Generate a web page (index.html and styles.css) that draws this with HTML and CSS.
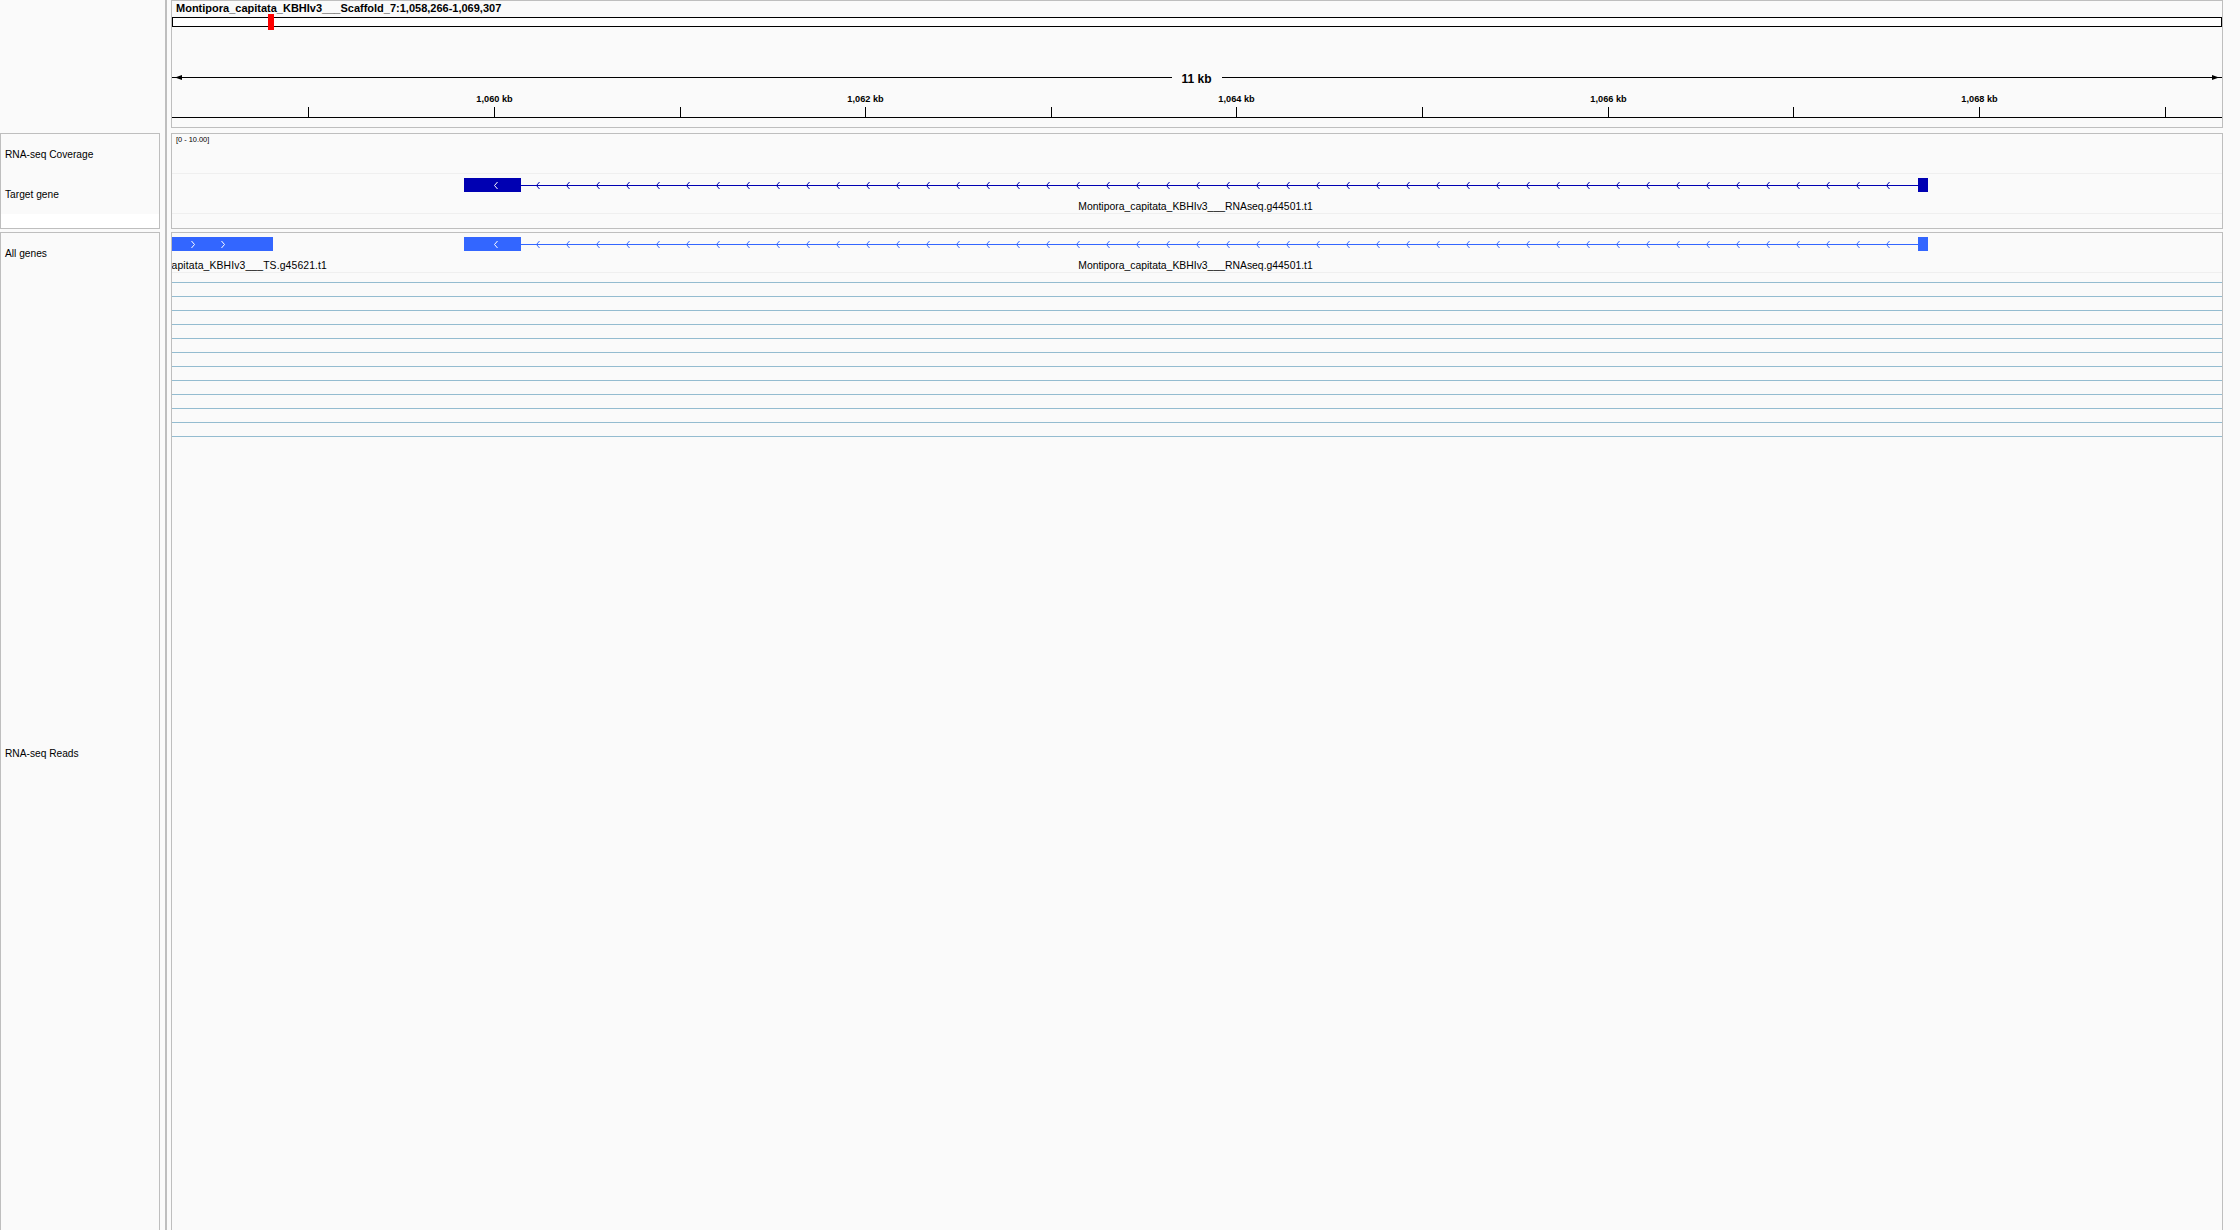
FILE: index.html
```html
<!DOCTYPE html>
<html>
<head>
<meta charset="utf-8">
<title>IGV</title>
<link rel="stylesheet" href="styles.css">
</head>
<body>
<div class="app">
  <div class="names">
    <div class="name-header"></div>
    <div class="name-panel np2">
      <div class="name-row">RNA-seq Coverage</div>
      <div class="name-row">Target gene</div>
      <div class="name-fill"></div>
    </div>
    <div class="name-panel np3">
      <div class="name-row">All genes</div>
      <div class="name-row reads-name">RNA-seq Reads</div>
    </div>
  </div>
  <div class="divider"></div>
  <div class="data">
    <div class="dpanel dheader">
      <div class="locus">Montipora_capitata_KBHIv3___Scaffold_7:1,058,266-1,069,307</div>
      <div class="ideo">
        <div class="ideo-box"></div>
        <div class="ideo-mark"></div>
      </div>
      <svg class="ruler" width="2050" height="96" viewBox="0 0 2050 96">
        <rect x="0" y="46" width="1000" height="1" fill="#000"/>
        <rect x="1050" y="46" width="1000" height="1" fill="#000"/>
        <polygon points="3,46.5 10,44 10,49" fill="#000"/>
        <polygon points="2047,46.5 2040,44 2040,49" fill="#000"/>
        <text class="span-label" x="1024.5" y="52" text-anchor="middle">11 kb</text>
        <g fill="#000">
          <rect x="136" y="76" width="1" height="10"/>
          <rect x="322" y="76" width="1" height="10"/>
          <rect x="508" y="76" width="1" height="10"/>
          <rect x="693" y="76" width="1" height="10"/>
          <rect x="879" y="76" width="1" height="10"/>
          <rect x="1064" y="76" width="1" height="10"/>
          <rect x="1250" y="76" width="1" height="10"/>
          <rect x="1436" y="76" width="1" height="10"/>
          <rect x="1621" y="76" width="1" height="10"/>
          <rect x="1807" y="76" width="1" height="10"/>
          <rect x="1993" y="76" width="1" height="10"/>
          <rect x="0" y="86" width="2050" height="1"/>
        </g>
        <g class="tick-labels" text-anchor="middle">
          <text x="322.5" y="71">1,060 kb</text>
          <text x="693.5" y="71">1,062 kb</text>
          <text x="1064.5" y="71">1,064 kb</text>
          <text x="1436.5" y="71">1,066 kb</text>
          <text x="1807.5" y="71">1,068 kb</text>
        </g>
      </svg>
    </div>
    <div class="dpanel d2">
      <div class="track cov"><span class="scale">[0 - 10.00]</span></div>
      <div class="track">
        <svg class="gene" width="2050" height="39" viewBox="0 0 2050 39">
          <defs>
            <pattern id="chevL1" x="364" y="0" width="30" height="39" patternUnits="userSpaceOnUse">
              <polyline points="3.5,8 0.5,11.5 3.5,15" fill="none" stroke="#0000b2" stroke-width="1"/>
            </pattern>
          </defs>
          <rect x="349" y="11" width="1397" height="1" fill="#0000b2"/>
          <rect x="364" y="0" width="1356" height="39" fill="url(#chevL1)"/>
          <rect x="292" y="4" width="57" height="14" fill="#0000b2"/>
          <rect x="1746" y="4" width="10" height="14" fill="#0000b2"/>
          <polyline points="325.5,8 322.5,11.5 325.5,15" fill="none" stroke="#fff" stroke-width="1"/>
          <text class="feat-label" x="1023.5" y="36" text-anchor="middle">Montipora_capitata_KBHIv3___RNAseq.g44501.t1</text>
        </svg>
      </div>
    </div>
    <div class="dpanel d3">
      <div class="track">
        <svg class="gene" width="2050" height="39" viewBox="0 0 2050 39">
          <defs>
            <pattern id="chevL2" x="364" y="0" width="30" height="39" patternUnits="userSpaceOnUse">
              <polyline points="3.5,8 0.5,11.5 3.5,15" fill="none" stroke="#3366ff" stroke-width="1"/>
            </pattern>
          </defs>
          <rect x="0" y="4" width="101" height="14" fill="#3366ff"/>
          <polyline points="19.5,8 22.5,11.5 19.5,15" fill="none" stroke="#fff" stroke-width="1"/>
          <polyline points="49.5,8 52.5,11.5 49.5,15" fill="none" stroke="#fff" stroke-width="1"/>
          <text class="feat-label" x="155" y="36" text-anchor="end" letter-spacing="0.12">Montipora_capitata_KBHIv3___TS.g45621.t1</text>
          <rect x="349" y="11" width="1397" height="1" fill="#3366ff"/>
          <rect x="364" y="0" width="1356" height="39" fill="url(#chevL2)"/>
          <rect x="292" y="4" width="57" height="14" fill="#3366ff"/>
          <rect x="1746" y="4" width="10" height="14" fill="#3366ff"/>
          <polyline points="325.5,8 322.5,11.5 325.5,15" fill="none" stroke="#fff" stroke-width="1"/>
          <text class="feat-label" x="1023.5" y="36" text-anchor="middle">Montipora_capitata_KBHIv3___RNAseq.g44501.t1</text>
        </svg>
      </div>
      <div class="reads">
        <div class="read-row"></div>
        <div class="read-row"></div>
        <div class="read-row"></div>
        <div class="read-row"></div>
        <div class="read-row"></div>
        <div class="read-row"></div>
        <div class="read-row"></div>
        <div class="read-row"></div>
        <div class="read-row"></div>
        <div class="read-row"></div>
        <div class="read-row"></div>
        <div class="read-row"></div>
      </div>
    </div>
  </div>
</div>
</body>
</html>
```

FILE: styles.css
```css
html, body {
  margin: 0;
  padding: 0;
}
body {
  width: 2240px;
  height: 1230px;
  overflow: hidden;
  background: #fafafa;
  font-family: "Liberation Sans", Arial, sans-serif;
  color: #000;
}
.app {
  display: flex;
  height: 1230px;
  overflow: hidden;
}
.names {
  width: 160px;
  margin-right: 5px;
  display: flex;
  flex-direction: column;
  flex: none;
}
.name-header {
  height: 128px;
  margin-bottom: 5px;
  flex: none;
}
.name-panel {
  border: 1px solid #bebebe;
  box-sizing: border-box;
  display: flex;
  flex-direction: column;
  flex: none;
}
.np2 {
  height: 96px;
  margin-bottom: 3px;
}
.np3 {
  border-bottom: none;
}
.name-row {
  height: 40px;
  flex: none;
  display: flex;
  align-items: center;
  padding-left: 4px;
  font-size: 10.2px;
  white-space: nowrap;
}
.reads-name {
  height: 960px;
}
.name-fill {
  flex: 1;
  background: #ffffff;
}
.divider {
  width: 2px;
  margin-right: 4px;
  background: #bebebe;
  flex: none;
}
.data {
  width: 2052px;
  flex: none;
  display: flex;
  flex-direction: column;
}
.dpanel {
  border: 1px solid #bebebe;
  box-sizing: border-box;
  overflow: hidden;
  flex: none;
}
.dheader {
  height: 128px;
  margin-bottom: 5px;
  display: flex;
  flex-direction: column;
}
.locus {
  height: 14px;
  line-height: 14px;
  padding-left: 4px;
  font-size: 11px;
  font-weight: bold;
  white-space: nowrap;
}
.ideo {
  position: relative;
  height: 16px;
}
.ideo-box {
  margin-top: 2px;
  height: 10px;
  box-sizing: border-box;
  border: 1px solid #000;
  background: #ffffff;
}
.ideo-mark {
  position: absolute;
  left: 96px;
  top: -1px;
  width: 6px;
  height: 16px;
  background: #ff0000;
}
.ruler {
  display: block;
}
.ruler text {
  font-family: "Liberation Sans", Arial, sans-serif;
  font-weight: bold;
  fill: #000;
}
.span-label {
  font-size: 12px;
}
.tick-labels {
  font-size: 9.2px;
}
.d2 {
  height: 96px;
  margin-bottom: 3px;
}
.d3 {
  flex: 1;
  border-bottom: none;
}
.track {
  height: 40px;
  box-sizing: border-box;
  border-bottom: 1px solid #efefef;
}
.cov {
  padding-left: 4px;
}
.scale {
  display: block;
  font-size: 7.4px;
  line-height: 9px;
  padding-top: 1px;
}
.gene {
  display: block;
}
.feat-label {
  font-family: "Liberation Sans", Arial, sans-serif;
  font-size: 10.4px;
  fill: #000;
}
.reads {
  padding-top: 9px;
}
.read-row {
  height: 13px;
  border-top: 1px solid #94bcd0;
}
```
